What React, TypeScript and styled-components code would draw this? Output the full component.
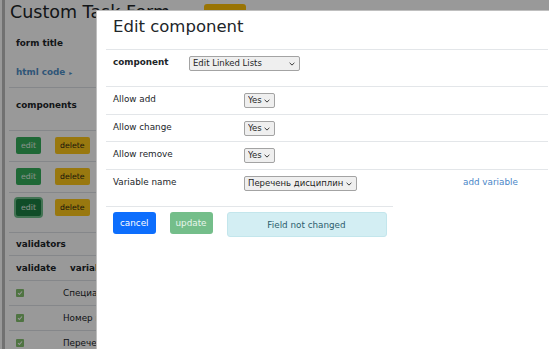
import React from "react";
import styled, { createGlobalStyle } from "styled-components";

const GlobalStyle = createGlobalStyle`
  html, body { margin: 0; padding: 0; }
  body { font-family: "DejaVu Sans", Verdana, sans-serif; background: #fff; }
`;

const chevron =
  "data:image/svg+xml;utf8," +
  encodeURIComponent(
    '<svg xmlns="http://www.w3.org/2000/svg" width="6" height="4" viewBox="0 0 6 4"><path d="M0.6 0.8 L3 3.1 L5.4 0.8" fill="none" stroke="#3a3a3a" stroke-width="1"/></svg>'
  );

const Screen = styled.div`
  position: relative;
  width: 549px;
  height: 349px;
  overflow: hidden;
  background: #fff;
`;

const Page = styled.div`
  margin-left: 2px;
  border-left: 3px solid #bdbdbd;
  height: 100%;
  color: #212529;
  font-size: 8.8px;
`;

const TitleBar = styled.div`
  display: flex;
  align-items: flex-start;
  height: 28px;
  padding: 2px 0 0 5px;
  box-sizing: border-box;
`;

const PageTitle = styled.h1`
  margin: 0;
  font-size: 17.5px;
  font-weight: 400;
  line-height: 21px;
`;

const SaveButton = styled.div`
  margin: 2px 0 0 34px;
  width: 42px;
  height: 22px;
  border-radius: 3px;
  background: #ffc107;
`;

const Panel = styled.div`
  margin-left: 4px;
`;

const PanelRow = styled.div<{ $h: number; $top?: number; $line?: boolean }>`
  display: flex;
  align-items: ${(p) => (p.$top !== undefined ? "flex-start" : "center")};
  gap: 14px;
  height: ${(p) => p.$h}px;
  padding: ${(p) => p.$top ?? 0}px 0 0 7px;
  box-sizing: border-box;
  border-bottom: ${(p) => (p.$line ? "1px solid #dee2e6" : "none")};
`;

const Bold = styled.span<{ $w?: number }>`
  font-weight: 700;
  width: ${(p) => (p.$w ? `${p.$w}px` : "auto")};
  white-space: nowrap;
`;

const Cell = styled.span`
  white-space: nowrap;
`;

const HtmlLink = styled.span`
  font-weight: 700;
  color: #4f8fc9;
  white-space: nowrap;
  & small {
    font-size: 6px;
    margin-left: 4px;
  }
`;

const SmallButton = styled.span<{ $kind: "edit" | "delete"; $active?: boolean }>`
  display: inline-flex;
  align-items: center;
  justify-content: center;
  height: 17px;
  padding: 0 5px;
  border-radius: 2px;
  font-size: 7.8px;
  background: ${(p) =>
    p.$kind === "edit" ? (p.$active ? "#1b8043" : "#34ad5a") : "#ffc81a"};
  color: ${(p) => (p.$kind === "edit" ? "#e3f5e8" : "#2a2410")};
  box-shadow: ${(p) => (p.$active ? "0 0 0 2px #6ec08a" : "none")};
`;

const Check = styled.span`
  display: inline-flex;
  align-items: center;
  justify-content: center;
  width: 8px;
  height: 8px;
  border-radius: 1px;
  background: #84c16e;
  margin-right: 39px;
`;

const Backdrop = styled.div`
  position: absolute;
  inset: 0;
  background: rgba(0, 0, 0, 0.4);
`;

const Modal = styled.div`
  position: absolute;
  left: 96px;
  top: 10px;
  width: 461px;
  bottom: -30px;
  padding: 0 9px;
  box-sizing: border-box;
  background: #fff;
  border-top: 1px solid rgba(0, 0, 0, 0.25);
  border-left: 1px solid rgba(0, 0, 0, 0.25);
  color: #212529;
  font-size: 8.8px;
`;

const ModalHeader = styled.div`
  height: 39px;
  box-sizing: border-box;
  padding: 6px 0 0 7px;
  border-bottom: 1px solid #e3e6e9;
`;

const ModalTitle = styled.h3`
  margin: 0;
  font-size: 16.5px;
  font-weight: 400;
  line-height: 20px;
`;

const FieldRow = styled.div<{ $h: number; $last?: boolean }>`
  display: flex;
  align-items: flex-start;
  height: ${(p) => p.$h}px;
  box-sizing: border-box;
  padding: 6px 0 0 7px;
  border-bottom: ${(p) => (p.$last ? "none" : "1px solid #e3e6e9")};
`;

const FieldLabel = styled.span<{ $w: number; $bold?: boolean }>`
  width: ${(p) => p.$w}px;
  flex: none;
  line-height: 13px;
  font-weight: ${(p) => (p.$bold ? 700 : 400)};
`;

const FieldCell = styled.span`
  width: 219px;
  flex: none;
`;

const Select = styled.select<{ $w?: number }>`
  appearance: none;
  -webkit-appearance: none;
  height: 15px;
  box-sizing: border-box;
  font-family: "DejaVu Sans", sans-serif;
  font-size: 8.5px;
  line-height: 13px;
  padding: 0 12px 0 3px;
  color: #1f1f1f;
  border: 1px solid #a3a3a3;
  border-radius: 2px;
  background: #efefef url("${chevron}") no-repeat right 4px center / 6px 4px;
  width: ${(p) => (p.$w ? `${p.$w}px` : "auto")};
`;

const AddLink = styled.span`
  color: #4a86c8;
  line-height: 13px;
`;

const Footer = styled.div`
  width: 287px;
  margin-top: 6px;
  padding: 5px 0 0 7px;
  box-sizing: border-box;
  border-top: 1px solid #e3e6e9;
  display: flex;
  align-items: flex-start;
  gap: 14px;
`;

const ActionButton = styled.span<{ $variant: "primary" | "success" }>`
  display: inline-flex;
  align-items: center;
  height: 22px;
  padding: 0 ${(p) => (p.$variant === "primary" ? 7 : 6)}px;
  border-radius: 3px;
  font-size: 8.8px;
  color: ${(p) => (p.$variant === "primary" ? "#fff" : "#e8f5ec")};
  background: ${(p) => (p.$variant === "primary" ? "#0d6efd" : "#74be8a")};
`;

const Alert = styled.div`
  width: 160px;
  height: 25px;
  box-sizing: border-box;
  display: flex;
  align-items: center;
  justify-content: center;
  background: #d3eef3;
  border: 1px solid #c3e6ec;
  border-radius: 3px;
  color: #2c5d6d;
  font-size: 8.8px;
`;

const CheckMark = () => (
  <svg width="6" height="6" viewBox="0 0 6 6">
    <path d="M1 3.2 L2.4 4.5 L5 1.5" fill="none" stroke="#fff" strokeWidth="1.1" />
  </svg>
);

const validators = ["Специальность", "Номер группы", "Перечень дисциплин"];
const options = ["Allow add", "Allow change", "Allow remove"];

export default function App() {
  return (
    <Screen>
      <GlobalStyle />
      <Page>
        <TitleBar>
          <PageTitle>Custom Task Form</PageTitle>
          <SaveButton />
        </TitleBar>
        <Panel>
          <PanelRow $h={29}>
            <Bold>form title</Bold>
          </PanelRow>
          <PanelRow $h={31} $line>
            <HtmlLink>
              html code<small>▸</small>
            </HtmlLink>
          </PanelRow>
          <PanelRow $h={43} $top={12} $line>
            <Bold>components</Bold>
          </PanelRow>
          {[31, 31, 40].map((h, i) => (
            <PanelRow key={i} $h={h} $top={6} $line>
              <SmallButton $kind="edit" $active={i === 2}>edit</SmallButton>
              <SmallButton $kind="delete">delete</SmallButton>
            </PanelRow>
          ))}
          <PanelRow $h={23} $line>
            <Bold>validators</Bold>
          </PanelRow>
          <PanelRow $h={25} $line>
            <Bold $w={40}>validate</Bold>
            <Bold>variable</Bold>
          </PanelRow>
          {validators.map((v) => (
            <PanelRow key={v} $h={25} $line>
              <Cell>
                <Check>
                  <CheckMark />
                </Check>
                {v}
              </Cell>
            </PanelRow>
          ))}
        </Panel>
      </Page>
      <Backdrop />
      <Modal>
        <ModalHeader>
          <ModalTitle>Edit component</ModalTitle>
        </ModalHeader>
        <FieldRow $h={37}>
          <FieldLabel $w={76} $bold>
            component
          </FieldLabel>
          <Select $w={111} defaultValue="linked">
            <option value="linked">Edit Linked Lists</option>
          </Select>
        </FieldRow>
        {options.map((o, i) => (
          <FieldRow key={o} $h={i === 1 ? 27 : 28}>
            <FieldLabel $w={131}>{o}</FieldLabel>
            <FieldCell>
              <Select defaultValue="yes">
                <option value="yes">Yes</option>
                <option value="no">No</option>
              </Select>
            </FieldCell>
          </FieldRow>
        ))}
        <FieldRow $h={30} $last>
          <FieldLabel $w={131}>Variable name</FieldLabel>
          <FieldCell>
            <Select defaultValue="list">
              <option value="list">Перечень дисциплин</option>
            </Select>
          </FieldCell>
          <AddLink>add variable</AddLink>
        </FieldRow>
        <Footer>
          <ActionButton $variant="primary">cancel</ActionButton>
          <ActionButton $variant="success">update</ActionButton>
          <Alert>Field not changed</Alert>
        </Footer>
      </Modal>
    </Screen>
  );
}
